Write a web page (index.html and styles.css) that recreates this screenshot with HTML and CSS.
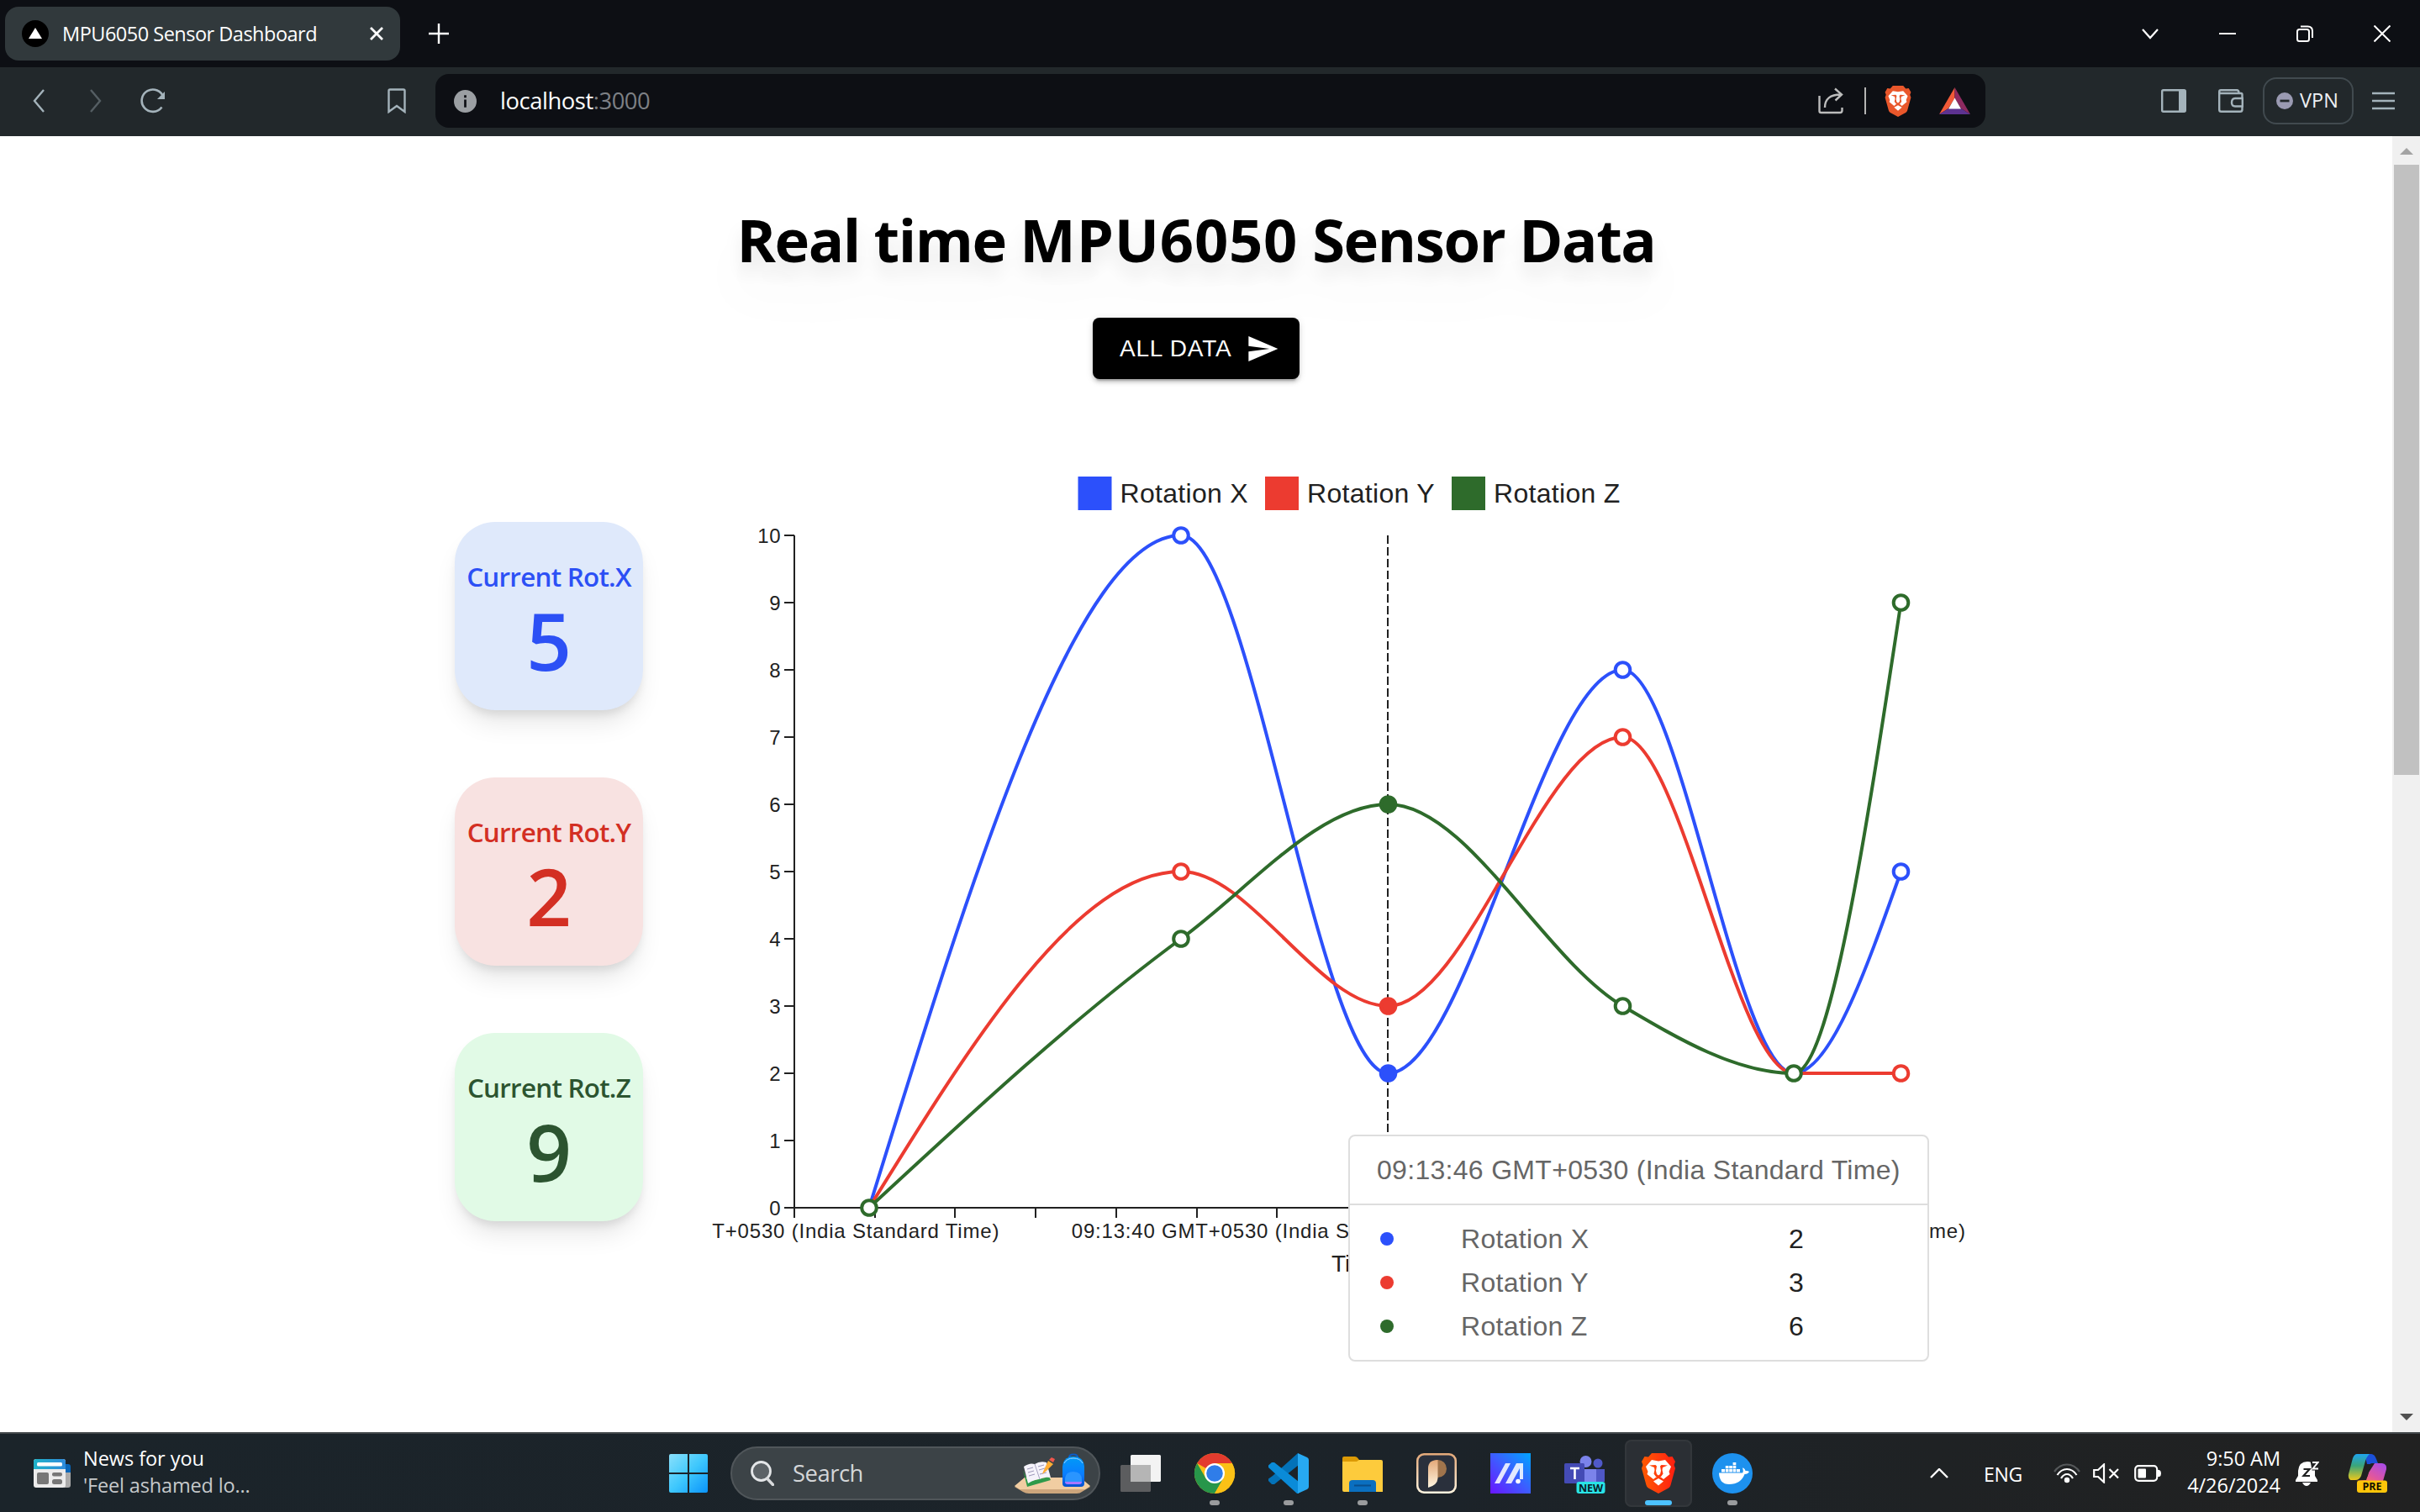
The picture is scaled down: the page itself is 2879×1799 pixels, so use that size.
FILE: index.html
```html
<!DOCTYPE html>
<html lang="en">
<head>
<meta charset="utf-8">
<title>MPU6050 Sensor Dashboard</title>
<link rel="stylesheet" href="styles.css">
</head>
<body>
<svg class="defs" width="0" height="0" aria-hidden="true">
  <defs>
    <linearGradient id="braveFill" gradientUnits="userSpaceOnUse" x1="0" y1="0" x2="40" y2="0"><stop offset="0" stop-color="#ff5a00"/><stop offset=".5" stop-color="#ff3d0c"/><stop offset="1" stop-color="#ff1f10"/></linearGradient>
    <symbol id="lion" viewBox="0 0 40 48">
      <path d="M12 0H28L32 4.500L36.500 4L40 10L38.500 14L40 18L34.500 38Q34 40 32 41.500L20 48L8 41.500Q6 40 5.500 38L0 18L1.500 14L0 10L3.500 4L8 4.500Z"/>
      <path fill="#fff" d="M12 8L20 9.500L28 8L35 16L32.500 22L33.500 25L26 31L23.500 29L20 27.500L16.500 29L14 31L6.500 25L7.500 22L5 16Z"/>
      <path fill="#fff" d="M20 30L26 33.500L20 38.500L14 33.500Z"/>
      <path d="M9 14.500L16.500 14L18 15.500L17 21L18 25L20 26.500L22 25L23 21L22 15.500L23.500 14L31 14.500L25 17L24.500 20L25.500 24.500L23 28L20 29.500L17 28L14.500 24.500L15.500 20L15 17Z"/>
      <path fill="#fff" d="M18.200 12H21.800L21 21L22 24.500L20 25.500L18 24.500L19 21Z"/>
    </symbol>
  </defs>
</svg>

<header class="tabstrip">
  <div class="tab">
    <svg class="favicon" viewBox="0 0 32 32"><circle cx="16" cy="16" r="16" fill="#000"/><path d="M16 9L24 22H8Z" fill="#fff"/></svg>
    <span class="tab-title">MPU6050 Sensor Dashboard</span>
    <svg class="tab-close" viewBox="0 0 16 16"><path d="M1 1L15 15M15 1L1 15" stroke="#fff" stroke-width="2.800"/></svg>
  </div>
  <svg class="new-tab" viewBox="0 0 24 24"><path d="M12 0V24M0 12H24" stroke="#fff" stroke-width="2.400"/></svg>
  <div class="window-controls">
    <svg viewBox="0 0 20 20"><path d="M1 5L10 15L19 5" stroke="#fff" stroke-width="2.200"/></svg>
    <svg viewBox="0 0 20 20"><path d="M0 10H20" stroke="#fff" stroke-width="2"/></svg>
    <svg viewBox="0 0 20 20"><rect x="1" y="5" width="14" height="14" rx="2.500" stroke="#fff" stroke-width="2"/><path d="M5 1.500H13.500Q19 1.500 19 7V15" stroke="#fff" stroke-width="2"/></svg>
    <svg viewBox="0 0 20 20"><path d="M0.500 0.500L19.500 19.500M19.500 0.500L0.500 19.500" stroke="#fff" stroke-width="2"/></svg>
  </div>
</header>

<nav class="toolbar">
  <svg class="back" viewBox="0 0 14 28"><path d="M13 1L2 14L13 27" stroke="#a4b3bb" stroke-width="2.400"/></svg>
  <svg class="forward" viewBox="0 0 14 28"><path d="M1 1L12 14L1 27" stroke="#555e63" stroke-width="2.400"/></svg>
  <svg class="reload" viewBox="0 0 30 30"><path d="M27.500 11A13.200 13.200 0 1 0 25.500 22.500" stroke="#a4b3bb" stroke-width="2.600"/><path d="M29 4V13H20Z" fill="#a4b3bb"/></svg>
  <svg class="bookmark" viewBox="0 0 22 30"><path d="M1.500 3Q1.500 1.500 3 1.500H19Q20.500 1.500 20.500 3V28L11 21L1.500 28Z" stroke="#a4b3bb" stroke-width="2.400"/></svg>
  <div class="urlbar">
    <svg class="info" viewBox="0 0 26 26"><circle cx="13" cy="13" r="13" fill="#9b9fa3"/><path d="M11.700 11H14.300V20H11.700ZM11.700 6H14.300V9H11.700Z" fill="#0d0f14"/></svg>
    <span class="url">localhost<span class="port">:3000</span></span>
    <svg class="share" viewBox="0 0 30 32"><path d="M1.500 10V28Q1.500 30 3.500 30H26Q28.500 30 28.500 27.500V24M8 24Q8 8.500 27 8.500M20 1.500L28 8.500L20.500 15.500" stroke="#bcbcbc" stroke-width="2.400"/></svg>
    <span class="divider"></span>
    <svg class="shield"><use href="#lion" fill="#e9572b"/></svg>
    <svg class="bat" viewBox="0 0 37 32"><path d="M18.500 0V13L11 25L0 32Z" fill="#f15a38"/><path d="M18.500 0L37 32L26 25L18.500 13Z" fill="#8e2a60"/><path d="M0 32H37L26 25H11Z" fill="#5d3290"/><path d="M18.500 12.500L26 25.500H11Z" fill="#fff"/></svg>
  </div>
  <svg class="sidebar-icon" viewBox="0 0 30 28"><rect x="1.200" y="1.200" width="27.600" height="25.600" rx="1.500" stroke="#a4b3bb" stroke-width="2.400"/><path d="M21 1H29V27H21Z" fill="#a4b3bb"/></svg>
  <svg class="wallet" viewBox="0 0 30 28"><path d="M28.500 11V6.500Q28.500 5 27 5H3Q1.200 5 1.200 3Q1.200 1.200 3 1.200H22Q24.500 1.200 24.500 4.500M1.200 3V24.500Q1.200 26.800 3.500 26.800H26Q28.500 26.800 28.500 24.500V21M28.800 11H20Q16 11 16 16Q16 20.500 20 20.500H28.800Z" stroke="#a4b3bb" stroke-width="2.400"/></svg>
  <div class="vpn"><svg viewBox="0 0 20 20"><circle cx="10" cy="10" r="10" fill="#9a9ab2"/><path d="M4.500 10H15.500" stroke="#22282b" stroke-width="2.800"/></svg><span>VPN</span></div>
  <svg class="menu" viewBox="0 0 27 22"><path d="M0 2H27M0 11H27M0 20H27" stroke="#a4b3bb" stroke-width="2.400"/></svg>
</nav>

<div class="viewport">
  <main class="page">
    <h1><span class="w1">Real time </span><span class="w2">MPU6050</span><span class="w3"> Sensor Data</span></h1>
    <button class="all-data"><span>ALL DATA</span><svg viewBox="0 0 24 24"><path fill="#fff" d="M2.010 21L23 12 2.010 3 2 10l15 2-15 2z"/></svg></button>
    <section class="dashboard">
      <div class="cards">
        <div class="card card-x"><span class="card-label">Current Rot.X</span><span class="card-value">5</span></div>
        <div class="card card-y"><span class="card-label">Current Rot.Y</span><span class="card-value">2</span></div>
        <div class="card card-z"><span class="card-label">Current Rot.Z</span><span class="card-value">9</span></div>
      </div>
      <div class="chart">
        <svg class="plot" viewBox="845 537 1500 1000">
          <g class="legend">
            <rect x="1282.500" y="567" width="40" height="40" class="fx"/><text x="1332.500" y="598">Rotation X</text>
            <rect x="1505" y="567" width="40" height="40" class="fy"/><text x="1555" y="598">Rotation Y</text>
            <rect x="1727" y="567" width="40" height="40" class="fz"/><text x="1777" y="598">Rotation Z</text>
          </g>
          <path class="axis" d="M945 637V1449M944 1437H2261M933 637H945M933 717H945M933 797H945M933 877H945M933 957H945M933 1037H945M933 1117H945M933 1197H945M933 1277H945M933 1357H945M933 1437H945M1041 1437V1449M1136 1437V1449M1232 1437V1449M1328 1437V1449M1424 1437V1449M1519 1437V1449"/>
          <g class="ticks ylabels">
            <text x="929.500" y="646">10</text><text x="929.500" y="726">9</text><text x="929.500" y="806">8</text><text x="929.500" y="886">7</text><text x="929.500" y="966">6</text><text x="929.500" y="1046">5</text><text x="929.500" y="1126">4</text><text x="929.500" y="1206">3</text><text x="929.500" y="1286">2</text><text x="929.500" y="1366">1</text><text x="929.500" y="1446">0</text>
          </g>
          <g class="ticks xlabels">
            <text x="944.500" y="1473">09:13:30 GMT+0530 (India Standard Time)</text>
            <text x="1519.500" y="1473">09:13:40 GMT+0530 (India Standard Time)</text>
            <text x="2094" y="1473">09:13:55 GMT+0530 (India Standard Time)</text>
          </g>
          <text class="axis-name" x="1584" y="1513">Ti</text>
          <g transform="translate(0.500 0)">
            <path class="line sx" d="M1033.500 1437C1157.170 1037 1280.830 637 1404.500 637C1486.670 637 1568.830 1277 1651 1277C1744 1277 1837 797 1930 797C1997.830 797 2065.670 1277 2133.500 1277C2176 1277 2218.500 1157 2261 1037"/>
            <path class="line sy" d="M1033.500 1437C1157.170 1237 1280.830 1037 1404.500 1037C1486.670 1037 1568.830 1197 1651 1197C1744 1197 1837 877 1930 877C1997.830 877 2065.670 1277 2133.500 1277H2261"/>
            <path class="line sz" d="M1033.500 1437C1157.170 1322.400 1280.830 1207.800 1404.500 1117C1486.670 1056.700 1568.830 957 1651 957C1744 957 1837 1142.100 1930 1197C1997.830 1237 2065.670 1277 2133.500 1277C2176 1277 2218.500 997 2261 717"/>
            <path class="cursor" d="M1650.500 637V1437"/>
            <g class="mark sx"><circle cx="1404.500" cy="637" r="8.800"/><circle cx="1651" cy="1277" r="8.800" class="fx"/><circle cx="1930" cy="797" r="8.800"/><circle cx="2261" cy="1037" r="8.800"/></g>
            <g class="mark sy"><circle cx="1404.500" cy="1037" r="8.800"/><circle cx="1651" cy="1197" r="8.800" class="fy"/><circle cx="1930" cy="877" r="8.800"/><circle cx="2261" cy="1277" r="8.800"/></g>
            <g class="mark sz"><circle cx="1033.500" cy="1437" r="8.800"/><circle cx="1404.500" cy="1117" r="8.800"/><circle cx="1651" cy="957" r="8.800" class="fz"/><circle cx="1930" cy="1197" r="8.800"/><circle cx="2133.500" cy="1277" r="8.800"/><circle cx="2261" cy="717" r="8.800"/></g>
          </g>
        </svg>
        <div class="tooltip">
          <div class="tooltip-head">09:13:46 GMT+0530 (India Standard Time)</div>
          <div class="tooltip-body">
            <div class="row"><i class="dot bx"></i><span class="name">Rotation X</span><span class="val">2</span></div>
            <div class="row"><i class="dot by"></i><span class="name">Rotation Y</span><span class="val">3</span></div>
            <div class="row"><i class="dot bz"></i><span class="name">Rotation Z</span><span class="val">6</span></div>
          </div>
        </div>
      </div>
    </section>
  </main>
  <div class="scrollbar">
    <svg viewBox="0 0 16 8"><path d="M0 8L8 0L16 8Z" fill="#a3a3a3"/></svg>
    <div class="track"><div class="thumb"></div></div>
    <svg viewBox="0 0 16 8"><path d="M0 0H16L8 8Z" fill="#505050"/></svg>
  </div>
</div>

<footer class="taskbar">
  <div class="news">
    <svg viewBox="0 0 44 34"><defs><linearGradient id="nw"><stop offset="0" stop-color="#1fb3c8"/><stop offset="1" stop-color="#2f8bdc"/></linearGradient></defs><path d="M36 6H41Q44 6 44 9V17H36Z" fill="#0a66b8"/><path d="M36 16H44V31Q44 34 41 34H36Z" fill="#aaa"/><rect width="38" height="34" rx="3" fill="#ececec"/><path d="M3 0H35Q38 0 38 3V12H0V3Q0 0 3 0Z" fill="url(#nw)"/><rect x="4" y="4" width="30" height="4.500" rx="1.500" fill="#fff"/><rect x="4" y="16" width="14" height="14" rx="2" fill="#777"/><rect x="22" y="16" width="12" height="4.500" rx="2" fill="#777"/><rect x="22" y="24" width="12" height="6" rx="2.500" fill="#777"/></svg>
    <div class="news-text"><span>News for you</span><span class="sub">'Feel ashamed lo...</span></div>
  </div>
  <svg class="start" viewBox="0 0 46 46"><defs><linearGradient id="wn" x1="0" y1="0" x2="1" y2="1"><stop offset="0" stop-color="#8ae0fb"/><stop offset=".5" stop-color="#3fc8fd"/><stop offset="1" stop-color="#0a94fb"/></linearGradient></defs><path d="M2 0H22V22H0V2Q0 0 2 0ZM24 0H44Q46 0 46 2V22H24ZM0 24H22V46H2Q0 46 0 44ZM24 24H46V44Q46 46 44 46H24Z" fill="url(#wn)"/></svg>
  <div class="search">
    <svg class="lens" viewBox="0 0 28 30"><circle cx="12.500" cy="12.500" r="11" stroke="#e4e6e8" stroke-width="2.800" fill="#5c6266"/><path d="M19.500 21L26.500 28.500" stroke="#d8dadc" stroke-width="3.400" stroke-linecap="round"/></svg>
    <span>Search</span>
    <svg class="art" viewBox="0 0 90 48"><defs><linearGradient id="bp" x1="0" y1="0" x2="0" y2="1"><stop offset="0" stop-color="#009cf7"/><stop offset=".6" stop-color="#0a7cff"/><stop offset="1" stop-color="#0650d0"/></linearGradient></defs><path d="M12 29H78L90 40L80 46Q78 48 74 48H17Q13 48 10 46L0 40Z" fill="#cda67c"/><path d="M12 29H78L90 39L84 43H6L0 39Z" fill="#f1cda2"/><path d="M10 20L15 40L43 32L41 28L16 34Z" fill="#2f9a4a"/><path d="M11 16Q18 11 24 13Q30 9 38 11L43 29Q34 28 30 31Q24 31 16 36Z" fill="#f5f3fb"/><path d="M24 13L30 31" stroke="#a8a3c0"/><path d="M15 19L22 17M16 23L23 21M17 27L24 25M28 16L35 14M29 20L36 18M30 25L38 23" stroke="#9b96b8" stroke-width="1"/><path d="M34 22L40 9L46 13L38 21L33 25Z" fill="#ffad33"/><path d="M41 8L44 5L48 7L46 11Z" fill="#f0564c"/><path d="M65 5Q65 1.500 70 1.500Q75 1.500 75 5" stroke="#0a5cc8" stroke-width="2"/><path d="M57 16Q58 4 70 4Q82 4 83 16V36Q83 40 79 40H61Q57 40 57 36Z" fill="url(#bp)"/><path d="M59 12Q62 6 70 6Q78 6 81 12" stroke="#9fd4ff"/><path d="M60 32Q60 22 70 22Q80 22 80 32V35H60Z" fill="#2a95ff"/><path d="M60 34H80Q80 37 77 37H63Q60 37 60 34Z" fill="#a877ff"/></svg>
  </div>
  <div class="apps">
    <div class="app"><svg viewBox="0 0 48 48"><rect y="14" width="36" height="32" rx="1.500" fill="#5c5d5f"/><rect x="12" y="2" width="36" height="32" rx="1.500" fill="#f3f3f3"/><path d="M12 14H36V34H12Z" fill="#b5b5b5"/></svg></div>
    <div class="app run"><svg viewBox="0 0 48 48"><circle cx="24" cy="24" r="24" fill="#fbc116"/><path d="M24 24L3.200 12A24 24 0 0 1 44.800 12H24Z" fill="#e33b2e"/><path d="M3.200 12A24 24 0 0 0 24 48L34.400 30L24 24L13.600 30Z" fill="#27964a"/><path d="M24 12H44.800A24 24 0 0 1 24 48L34.400 30Z" fill="#fbc116"/><circle cx="24" cy="24" r="12" fill="#fff"/><circle cx="24" cy="24" r="9.800" fill="#2f7de9"/></svg></div>
    <div class="app run"><svg viewBox="0 0 48 48"><path d="M35 0L5 27L0 30.500V33L4 37H7L36 14Z" fill="#0372b8"/><path d="M0 17V14.500L4 11H7L36 34V48H34Z" fill="#0a8bd8"/><path d="M35 0L46 5Q48 6 48 8V40Q48 42 46 43L35 48Z" fill="#27a9f2"/></svg></div>
    <div class="app run"><svg viewBox="0 0 48 48"><path d="M0 6Q0 4 2 4H15Q17 4 18 5.500L20 8V16H0Z" fill="#dc9a05"/><path d="M0 10H17L20 8H46Q48 8 48 10V46H2Q0 46 0 44Z" fill="#fdcb3c"/><path d="M8 46V36Q8 32 12 32H36Q40 32 40 36V46Z" fill="#0a6fc0"/><path d="M14 38.500H34" stroke="#094f8c" stroke-width="2"/></svg></div>
    <div class="app"><svg viewBox="0 0 48 48"><defs><linearGradient id="pg" x1="0" y1="0" x2="0" y2="1"><stop offset="0" stop-color="#e3a878"/><stop offset="1" stop-color="#fff5e0"/></linearGradient></defs><rect width="48" height="48" rx="9" fill="url(#pg)"/><rect x="2.500" y="2.500" width="43" height="43" rx="7" fill="#2a303c"/><circle cx="25.500" cy="18.500" r="10.500" fill="#a0744c"/><path d="M14 41V18Q14 8 25.500 8V30Q25 38 14 41Z" fill="url(#pg)"/></svg></div>
    <div class="app"><svg viewBox="0 0 48 48"><defs><linearGradient id="mg" x1="0" y1="1" x2="1" y2="0"><stop offset="0" stop-color="#6a14ff"/><stop offset=".5" stop-color="#3d5cff"/><stop offset="1" stop-color="#00a5ff"/></linearGradient></defs><rect width="48" height="48" fill="url(#mg)"/><path d="M5 36L18 12H24L11 36ZM18 36L31 12H39V31H35V18L25 36Z" fill="#fff" opacity=".85"/><circle cx="33" cy="33.500" r="2.800" fill="#fff"/></svg></div>
    <div class="app"><svg viewBox="0 0 48 48"><circle cx="40" cy="12" r="5.500" fill="#5059c9"/><path d="M34 19H48V34H34Z" fill="#4f57c5"/><circle cx="25.500" cy="10" r="7" fill="#7b83eb"/><path d="M20 19H38V36H20Z" fill="#7b83eb"/><rect y="12" width="24" height="24" rx="1.500" fill="#444bb5"/><path d="M7 18H18M12.500 18V31" stroke="#fff" stroke-width="2.600"/><rect x="14.500" y="34" width="34" height="14" rx="3" fill="#29e3e6"/><text x="31.500" y="45.500" class="badge">NEW</text></svg></div>
    <div class="app active"><svg class="lion"><use href="#lion" fill="url(#braveFill)"/></svg></div>
    <div class="app run"><svg viewBox="0 0 48 48"><circle cx="24" cy="24" r="24" fill="#1d91ee"/><path d="M8 23.500H36Q37.500 22 36 17.500Q38.500 17.500 39.500 21Q42 20.500 44 22Q42.500 25 38.500 25Q34 37 20 37Q8.500 37 8 23.500Z" fill="#fff"/><path d="M11 19H15V22.500H11ZM15.800 19H19.500V22.500H15.800ZM20.200 19H23.900V22.500H20.200ZM24.600 19H28.300V22.500H24.600ZM29 19H33V22.500H29ZM15.800 15H19.500V18.300H15.800ZM20.200 15H23.900V18.300H20.200ZM24.600 15H28.300V18.300H24.600ZM24.600 11H28.300V14.300H24.600Z" fill="#fff"/></svg></div>
  </div>
  <div class="tray">
    <svg class="chev" viewBox="0 0 22 12"><path d="M1 11L11 1L21 11" stroke="#fff" stroke-width="2.400"/></svg>
    <span class="lang">ENG</span>
    <svg class="wifi" viewBox="0 0 32 24"><path d="M1 10Q7 1.500 16 1.500T31 10" stroke="#56595b" stroke-width="2.200"/><path d="M4.500 14Q9 7 16 7T27.500 14M9 18Q12 13 16 13T23 18" stroke="#fff" stroke-width="2.200"/><circle cx="16" cy="20" r="3.200" fill="#fff"/></svg>
    <svg class="mute" viewBox="0 0 32 24"><path d="M1.200 8H6L13 1.500V22.500L6 16H1.200ZM19.500 7L30 17.500M30 7L19.500 17.500" stroke="#fff" stroke-width="2.200"/></svg>
    <svg class="battery" viewBox="0 0 32 20"><rect x="1.200" y="1.200" width="26" height="17.600" rx="4" stroke="#fff" stroke-width="2.200"/><rect x="4.500" y="4.500" width="9.500" height="11" rx="1" fill="#fff"/><path d="M28 6H30Q32 7 32 10T30 14H28Z" fill="#fff"/></svg>
    <div class="clock"><span>9:50 AM</span><span>4/26/2024</span></div>
    <svg class="bell" viewBox="0 0 28 30"><path d="M3 12Q4 1 14 1Q24 1 23 12V18L26 23V25H0V23L3 18ZM8 26H18Q16 30 13 30T8 26Z" fill="#fff"/><path d="M17.500 0H28V11.500H19.500Z" fill="#202122"/><path d="M20 2H26.500L20.500 9.500H27" stroke="#fff" stroke-width="2"/><path d="M9.500 10H16.500L9.500 18H17" stroke="#202122" stroke-width="2.200"/></svg>
    <svg class="copilot" viewBox="0 0 47 46"><defs><linearGradient id="c1" x1="0" y1="0" x2="0" y2="1"><stop offset="0" stop-color="#1fa4ee"/><stop offset=".45" stop-color="#3aa57a"/><stop offset="1" stop-color="#ecc81c"/></linearGradient><linearGradient id="c2" x1="1" y1="0" x2="0" y2="1"><stop offset="0" stop-color="#a34bf0"/><stop offset=".6" stop-color="#e0569f"/><stop offset="1" stop-color="#ff7a50"/></linearGradient></defs><path d="M20 0H28Q32 0 34 6L36 11H29Q26 11 24 16Z" fill="#1b50d8"/><path d="M11 0H26Q22 3 20 12L16 26Q14 31 9 31H5Q0 31 1 24L6 5Q8 0 11 0Z" fill="url(#c1)"/><path d="M32 11H41Q47 12 46 18L42 32H10L20 31Q23 30 25 22Z" fill="url(#c2)"/><path d="M28 12L22 31H17L23 12Z" fill="#202122"/><rect x="11" y="31.500" width="36" height="14.500" rx="3" fill="#fdc50a"/><text x="29" y="43.400" class="badge pre">PRE</text></svg>
  </div>
</footer>
</body>
</html>
```
FILE: styles.css
```css
* { box-sizing: border-box; }
body {
  margin: 0;
  width: 2879px;
  height: 1799px;
  overflow: hidden;
  display: flex;
  flex-direction: column;
  background: #fff;
  font-family: "Open Sans", "Noto Sans", sans-serif;
  font-size: 23.5px;
  letter-spacing: -0.02em;
}
svg { display: block; flex: none; }
svg path[stroke], svg rect[stroke] { fill: none; }
.defs { position: absolute; }

/* Browser frame */
.tabstrip {
  height: 80px;
  flex: none;
  display: flex;
  align-items: center;
  padding: 0 35px 0 6px;
  background: #0d0f14;
  color: #fff;
}
.tab {
  width: 470px;
  height: 64px;
  display: flex;
  align-items: center;
  padding: 0 20px;
  border-radius: 16px;
  background: #31393c;
}
.favicon { width: 32px; height: 32px; margin-right: 16px; }
.tab-title { letter-spacing: -0.5px; margin-top: -1px; white-space: nowrap; }
.tab-close { width: 16px; height: 16px; margin-left: auto; }
.new-tab { width: 24px; height: 24px; margin-left: 34px; }
.window-controls { margin-left: auto; display: flex; gap: 72px; }
.window-controls svg { width: 20px; height: 20px; }

.toolbar {
  height: 82px;
  flex: none;
  display: flex;
  align-items: center;
  padding: 0 30px 2px 39px;
  background: #22282b;
}
.back, .forward { width: 14px; height: 28px; }
.forward { margin-left: 54px; }
.reload { width: 30px; height: 30px; margin-left: 46px; }
.bookmark { width: 22px; height: 30px; margin-left: 264px; }
.urlbar {
  width: 1844px;
  height: 64px;
  margin-left: 35px;
  padding: 0 18px 0 22px;
  display: flex;
  align-items: center;
  border-radius: 16px;
  background: #0d0f14;
}
.info { width: 27px; height: 27px; }
.url { margin-left: 28px; margin-top: -1px; color: #fff; font-size: 27.4px; letter-spacing: -0.45px; }
.port { color: #7d8085; }
.share { width: 30px; height: 32px; margin-left: auto; }
.divider { width: 2px; height: 32px; margin-left: 25px; background: #b4b4b4; }
.shield { width: 32px; height: 37px; margin-left: 22px; }
.bat { width: 37px; height: 32px; margin-left: 33px; }
.sidebar-icon { width: 30px; height: 28px; margin-left: 209px; }
.wallet { width: 30px; height: 28px; margin-left: 38px; }
.vpn {
  width: 108px;
  height: 56px;
  margin-left: 23px;
  padding-left: 14px;
  display: flex;
  align-items: center;
  gap: 8px;
  border: 2px solid #414a4f;
  border-radius: 16px;
  color: #eef0f4;
  letter-spacing: 0;
}
.vpn svg { width: 20px; height: 20px; }
.vpn span { margin-top: -2px; }
.menu { width: 27px; height: 22px; margin-left: 22px; }

/* Page */
.viewport { height: 1542px; flex: none; display: flex; }
.page {
  flex: 1;
  display: flex;
  flex-direction: column;
  align-items: center;
}
h1 {
  margin: 71px 0 0;
  height: 106px;
  line-height: 104px;
  font-size: 70.5px;
  font-weight: 700;
  white-space: pre;
  color: #000;
  filter: drop-shadow(0 40px 26px rgba(0, 0, 0, 0.03)) drop-shadow(0 16px 10px rgba(0, 0, 0, 0.08));
}
.w1 { letter-spacing: -1.5px; }
.w2 { letter-spacing: 0.8px; }
.w3 { letter-spacing: -1.4px; }
.all-data {
  margin-top: 39px;
  width: 246px;
  height: 73px;
  padding: 0 24px 0 32px;
  display: flex;
  align-items: center;
  justify-content: space-between;
  border: 0;
  border-radius: 8px;
  background: #000;
  color: #fff;
  font: 28px "Liberation Sans", Arial, sans-serif;
  letter-spacing: 0.8px;
  white-space: nowrap;
  box-shadow: 0 6px 2px -4px rgba(0, 0, 0, 0.2), 0 4px 4px rgba(0, 0, 0, 0.14), 0 2px 10px rgba(0, 0, 0, 0.12);
}
.all-data svg { width: 40px; height: 40px; }
.dashboard {
  align-self: flex-start;
  margin: 86px 0 0 541px;
  display: flex;
  gap: 80px;
}
.cards {
  padding-top: 84px;
  display: flex;
  flex-direction: column;
  gap: 80px;
}
.card {
  width: 224px;
  height: 224px;
  padding-top: 41px;
  display: flex;
  flex-direction: column;
  align-items: center;
  border-radius: 48px;
  font-weight: 600;
  white-space: nowrap;
  box-shadow: 0 20px 30px -6px rgba(0, 0, 0, 0.1), 0 8px 12px -4px rgba(0, 0, 0, 0.1);
}
.card-label { font-size: 31.4px; line-height: 48px; letter-spacing: -0.75px; }
.card-value { font-size: 94px; line-height: 96px; margin-top: 4px; letter-spacing: 0; }
.card-x { background: #dfe9fb; color: #2c50f5; }
.card-y { background: #f8e2e1; color: #d32f23; }
.card-z { background: #e1fae6; color: #2c5430; }

.chart { position: relative; width: 1500px; height: 1000px; font-family: "Liberation Sans", Arial, sans-serif; }
.plot { width: 1500px; height: 1000px; overflow: hidden; }
.plot text { fill: #212121; letter-spacing: 0; }
.plot .legend text { font-size: 32px; letter-spacing: 0.3px; }
.plot .ticks text { font-size: 24px; letter-spacing: 0.8px; }
.ylabels { text-anchor: end; }
.xlabels { text-anchor: middle; }
.plot .axis-name { font-size: 28px; }
.plot .axis { fill: none; stroke: #212121; stroke-width: 2; }
.cursor { stroke: #212121; stroke-width: 2; stroke-dasharray: 10 4; }
.line { fill: none; stroke-width: 4; }
.mark { fill: #fff; stroke-width: 4; }
.sx { stroke: #2c50fb; }
.sy { stroke: #ec3b30; }
.sz { stroke: #2e6b2b; }
.fx { fill: #2c50fb; }
.fy { fill: #ec3b30; }
.fz { fill: #2e6b2b; }

.tooltip {
  position: absolute;
  left: 759px;
  top: 813px;
  width: 691px;
  height: 270px;
  border: 2px solid #dedede;
  border-radius: 8px;
  background: #fff;
  color: #666;
  font-size: 32px;
  letter-spacing: 0.3px;
  white-space: nowrap;
}
.tooltip-head { height: 82px; padding: 0 32px; line-height: 80px; border-bottom: 2px solid #dedede; }
.tooltip-body { padding-top: 14px; }
.row { height: 52px; display: flex; align-items: center; padding-left: 36px; }
.dot { width: 16px; height: 16px; border-radius: 50%; }
.bx { background: #2c50fb; }
.by { background: #ec3b30; }
.bz { background: #2e6b2b; }
.name { width: 390px; margin-left: 80px; }
.val { color: #212121; }

.scrollbar {
  width: 33px;
  padding: 14px 0;
  display: flex;
  flex-direction: column;
  align-items: center;
  background: #f0f0f0;
}
.scrollbar svg { width: 16px; height: 8px; }
.track { flex: 1; padding-top: 12px; }
.thumb { width: 30px; height: 726px; background: #c1c1c1; }

/* Taskbar */
.taskbar {
  height: 95px;
  flex: none;
  display: flex;
  align-items: center;
  padding: 0 39px 0 40px;
  border-top: 2px solid #43484b;
  background: linear-gradient(90deg, #1b242a, #1c2329 60%, #1f2224 80%, #212121);
  color: #fff;
  white-space: nowrap;
}
.news { width: 756px; display: flex; align-items: center; gap: 15px; }
.news svg { width: 44px; height: 34px; }
.news-text, .clock { display: flex; flex-direction: column; line-height: 32px; margin-top: -3px; }
.news-text { letter-spacing: -0.05px; }
.sub { color: #c6c9cb; letter-spacing: -0.15px; }
.start { width: 46px; height: 46px; }
.search {
  width: 440px;
  height: 64px;
  margin-left: 27px;
  padding: 0 10px 0 22px;
  display: flex;
  align-items: center;
  border: 2px solid #50565a;
  border-radius: 32px;
  background: #3c4347;
  color: #d4d6d8;
  font-size: 27.4px;
}
.lens { width: 28px; height: 30px; margin-right: 22px; }
.art { width: 90px; height: 48px; margin-left: auto; }
.apps { display: flex; gap: 8px; margin-left: 8px; }
.app {
  position: relative;
  width: 80px;
  height: 80px;
  display: flex;
  align-items: center;
  justify-content: center;
  border-radius: 8px;
}
.app svg { width: 48px; height: 48px; overflow: visible; }
.app .lion { width: 40px; }
.active { background: #2b2f34; box-shadow: inset 0 0 0 2px #33373b; }
.run::after, .active::after {
  content: "";
  position: absolute;
  left: 34px;
  top: 72px;
  width: 12px;
  height: 6px;
  border-radius: 3px;
  background: #9a9c9e;
}
.active::after { left: 24px; width: 32px; background: #4cc2ff; }
.badge {
  font-family: "Open Sans", sans-serif;
  font-size: 12.5px;
  font-weight: 700;
  letter-spacing: 0;
  text-anchor: middle;
  fill: #082028;
}
.pre { fill: #141000; }
.tray { margin-left: auto; display: flex; align-items: center; }
.chev { width: 22px; height: 12px; margin-right: 42px; }
.lang { width: 46px; margin-right: 37px; font-size: 23px; margin-top: 2px; letter-spacing: -0.3px; }
.wifi { width: 32px; height: 24px; margin-right: 15px; }
.mute { width: 32px; height: 24px; margin-right: 17px; }
.battery { width: 32px; height: 20px; }
.clock { width: 142px; align-items: flex-end; letter-spacing: -0.05px; }
.bell { width: 28px; height: 30px; margin-left: 18px; }
.copilot { width: 47px; height: 46px; margin-left: 34px; }
```
